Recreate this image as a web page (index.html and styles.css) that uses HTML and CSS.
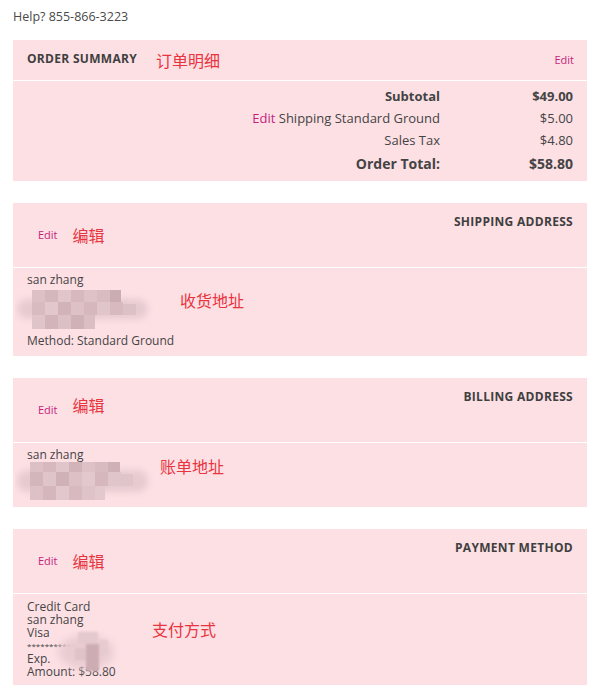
FILE: index.html
```html
<!DOCTYPE html>
<html lang="en">
<head>
<meta charset="utf-8">
<title>Order review</title>
<link rel="stylesheet" href="styles.css">
</head>
<body>
<div class="page">
  <div class="help">Help? 855-866-3223</div>

  <section class="panel">
    <header class="sum-head">
      <h2 class="title">ORDER SUMMARY</h2>
      <span class="note note-inline">订单明细</span>
      <a class="edit edit-right">Edit</a>
    </header>
    <div class="sum-body">
      <div class="lbl strong">Subtotal</div><div class="val strong">$49.00</div>
      <div class="lbl"><a class="edit-inline">Edit</a> Shipping Standard Ground</div><div class="val">$5.00</div>
      <div class="lbl">Sales Tax</div><div class="val">$4.80</div>
      <div class="lbl total">Order Total:</div><div class="val total">$58.80</div>
    </div>
  </section>

  <section class="panel">
    <header class="addr-head">
      <h2 class="title title-right">SHIPPING ADDRESS</h2>
      <div class="edit-row"><a class="edit">Edit</a><span class="note note-edit">编辑</span></div>
    </header>
    <div class="addr-body">
      <div class="line">san zhang</div>
      <svg class="mosaic" width="140" height="47" viewBox="0 0 140 47" aria-hidden="true">
        <defs>
          <filter id="soft" x="-20%" y="-30%" width="140%" height="160%"><feGaussianBlur stdDeviation="3.5"/></filter>
          <filter id="edge" x="-10%" y="-10%" width="120%" height="120%"><feGaussianBlur stdDeviation="0.7"/></filter>
        </defs>
        <rect x="2" y="12" width="131" height="20" rx="10" fill="#e6cad0" filter="url(#soft)"/>
        <g filter="url(#edge)">
          <rect x="17" y="3" width="13" height="12" fill="#dcc0c6"/>
          <rect x="30" y="3" width="13" height="12" fill="#d4b6bd"/>
          <rect x="43" y="3" width="13" height="12" fill="#e0c5cb"/>
          <rect x="56" y="3" width="13" height="12" fill="#d6b8be"/>
          <rect x="69" y="3" width="13" height="12" fill="#dec2c8"/>
          <rect x="82" y="3" width="13" height="12" fill="#d9bcc2"/>
          <rect x="95" y="3" width="11" height="14" fill="#ccacb3"/>
          <rect x="17" y="15" width="13" height="13" fill="#d8bbc1"/>
          <rect x="30" y="15" width="13" height="13" fill="#e2c7cc"/>
          <rect x="43" y="15" width="13" height="13" fill="#d2b3ba"/>
          <rect x="56" y="15" width="13" height="13" fill="#ddc1c7"/>
          <rect x="69" y="15" width="13" height="13" fill="#d5b7bd"/>
          <rect x="82" y="15" width="13" height="13" fill="#e0c5ca"/>
          <rect x="95" y="15" width="13" height="13" fill="#d7b9bf"/>
          <rect x="108" y="17" width="13" height="11" fill="#dcc1c6"/>
          <rect x="17" y="28" width="13" height="14" fill="#dfc4c9"/>
          <rect x="30" y="28" width="13" height="14" fill="#d3b4bb"/>
          <rect x="43" y="28" width="13" height="14" fill="#dcc0c5"/>
          <rect x="56" y="28" width="13" height="14" fill="#d0b1b8"/>
          <rect x="69" y="28" width="11" height="14" fill="#dbbec4"/>
        </g>
      </svg>
      <div class="line">Method: Standard Ground</div>
      <span class="note note-ship">收货地址</span>
    </div>
  </section>

  <section class="panel">
    <header class="addr-head">
      <h2 class="title title-right">BILLING ADDRESS</h2>
      <div class="edit-row"><a class="edit">Edit</a><span class="note note-edit note-up">编辑</span></div>
    </header>
    <div class="addr-body">
      <div class="line">san zhang</div>
      <svg class="mosaic mosaic-bill" width="140" height="45" viewBox="0 0 140 45" aria-hidden="true">
        <defs>
          <filter id="soft2" x="-20%" y="-30%" width="140%" height="160%"><feGaussianBlur stdDeviation="3.5"/></filter>
          <filter id="edge2" x="-10%" y="-10%" width="120%" height="120%"><feGaussianBlur stdDeviation="0.7"/></filter>
        </defs>
        <rect x="2" y="8" width="131" height="22" rx="10" fill="#e6cad0" filter="url(#soft2)"/>
        <g filter="url(#edge2)">
          <rect x="15" y="0" width="13" height="10" fill="#dcc0c6"/>
          <rect x="28" y="0" width="13" height="10" fill="#d6b8be"/>
          <rect x="41" y="0" width="13" height="10" fill="#e0c5cb"/>
          <rect x="54" y="0" width="13" height="10" fill="#d2b3ba"/>
          <rect x="67" y="0" width="13" height="10" fill="#ddc1c7"/>
          <rect x="80" y="0" width="13" height="10" fill="#d8bbc1"/>
          <rect x="93" y="0" width="12" height="10" fill="#cfb0b7"/>
          <rect x="15" y="10" width="13" height="14" fill="#d3b5bc"/>
          <rect x="28" y="10" width="13" height="14" fill="#dfc4c9"/>
          <rect x="41" y="10" width="13" height="14" fill="#d0b1b8"/>
          <rect x="54" y="10" width="13" height="14" fill="#dcc0c5"/>
          <rect x="67" y="10" width="13" height="14" fill="#e3c9ce"/>
          <rect x="80" y="10" width="13" height="14" fill="#d5b7bd"/>
          <rect x="93" y="10" width="13" height="14" fill="#e0c5ca"/>
          <rect x="106" y="12" width="12" height="12" fill="#dfc4c9"/>
          <rect x="15" y="24" width="13" height="14" fill="#ddc1c6"/>
          <rect x="28" y="24" width="13" height="14" fill="#d4b6bc"/>
          <rect x="41" y="24" width="13" height="14" fill="#e2c7cc"/>
          <rect x="54" y="24" width="13" height="14" fill="#d7b9bf"/>
          <rect x="67" y="24" width="13" height="14" fill="#dec3c8"/>
          <rect x="80" y="24" width="10" height="14" fill="#e3c9ce"/>
        </g>
      </svg>
      <span class="note note-bill">账单地址</span>
    </div>
  </section>

  <section class="panel">
    <header class="addr-head">
      <h2 class="title title-right">PAYMENT METHOD</h2>
      <div class="edit-row"><a class="edit">Edit</a><span class="note note-edit">编辑</span></div>
    </header>
    <div class="pay-body">
      <div class="pline">Credit Card</div>
      <div class="pline">san zhang</div>
      <div class="pline">Visa</div>
      <div class="pline stars">***********</div>
      <div class="pline">Exp.</div>
      <div class="pline">Amount: $58.80</div>
      <svg class="pay-mosaic" width="68" height="46" viewBox="0 0 68 46" aria-hidden="true">
        <defs>
          <filter id="soft3" x="-30%" y="-30%" width="160%" height="160%"><feGaussianBlur stdDeviation="4"/></filter>
          <filter id="edge3" x="-10%" y="-10%" width="120%" height="120%"><feGaussianBlur stdDeviation="0.8"/></filter>
        </defs>
        <ellipse cx="33" cy="22" rx="28" ry="17" fill="#e8ccd2" filter="url(#soft3)"/>
        <g filter="url(#edge3)">
          <rect x="25" y="2" width="20" height="12" fill="#e4c9ce"/>
          <rect x="22" y="18" width="12" height="12" fill="#dfc3c9"/>
          <rect x="33" y="14" width="13" height="27" fill="#cdacb3"/>
          <rect x="46" y="10" width="9" height="14" fill="#e6cbd0"/>
        </g>
      </svg>
      <span class="note note-pay">支付方式</span>
    </div>
  </section>
</div>
</body>
</html>
```

FILE: styles.css
```css
* { box-sizing: border-box; }

body {
  margin: 0;
  background: #ffffff;
  color: #444444;
  font-family: "Open Sans", "Liberation Sans", Arial, sans-serif;
}

.page {
  width: 599px;
  padding: 9px 12px 0 13px;
}

.help {
  font-size: 12.5px;
  line-height: 16px;
  color: #4a4a4a;
  margin-bottom: 15px;
}

.panel {
  background: #fde0e4;
  margin-bottom: 22px;
}

.title {
  margin: 0;
  font-size: 12px;
  font-weight: 700;
  color: #3f3f3f;
  letter-spacing: 0.3px;
}

.note {
  font-family: "Noto Sans CJK SC", "Noto Sans CJK JP", sans-serif;
  font-size: 16px;
  line-height: 20px;
  color: #e8343f;
  font-weight: 400;
}

.edit {
  font-size: 11px;
  color: #c41f7d;
  text-decoration: none;
}

/* Order summary */
.sum-head {
  height: 41px;
  display: flex;
  align-items: center;
  padding: 0 13px 3px 14px;
  border-bottom: 1px solid #ffffff;
}

.note-inline { margin-left: 19px; margin-top: 3px; }

.edit-right { margin-left: auto; margin-top: 1px; }

.sum-body {
  display: grid;
  grid-template-columns: 1fr 133px;
  padding: 4px 14px 6px 14px;
  font-size: 13px;
  line-height: 22px;
}

.lbl, .val { text-align: right; }

.strong { font-weight: 700; }

.total { font-weight: 700; font-size: 14px; padding-top: 2px; }

.edit-inline { color: #c41f7d; text-decoration: none; }

/* Address panels */
.addr-head {
  height: 65px;
  padding: 12px 14px 0 14px;
  border-bottom: 1px solid #ffffff;
}

.title-right {
  text-align: right;
  line-height: 14px;
}

.edit-row {
  display: flex;
  align-items: center;
  height: 14px;
  margin-top: -2px;
  padding-left: 11px;
}

.note-edit { margin-left: 15px; position: relative; top: 1px; }
.note-up { top: -4px; }

.addr-body {
  position: relative;
  padding: 5px 14px 8px 14px;
  font-size: 12px;
  line-height: 14px;
}

.line { height: 14px; }

.mosaic {
  display: block;
  margin-left: -12px;
}

.mosaic-bill { margin-bottom: -8px; }

.note-ship { position: absolute; left: 167px; top: 22px; }
.note-bill { position: absolute; left: 147px; top: 13px; }
.note-pay  { position: absolute; left: 139px; top: 25px; }

/* Payment */
.pay-body {
  position: relative;
  padding: 6px 14px 7px 14px;
  font-size: 12px;
  line-height: 13px;
}

.pline { height: 13px; }

.stars { font-size: 8px; letter-spacing: 0; }

.pay-mosaic {
  position: absolute;
  left: 40px;
  top: 36px;
}
```
